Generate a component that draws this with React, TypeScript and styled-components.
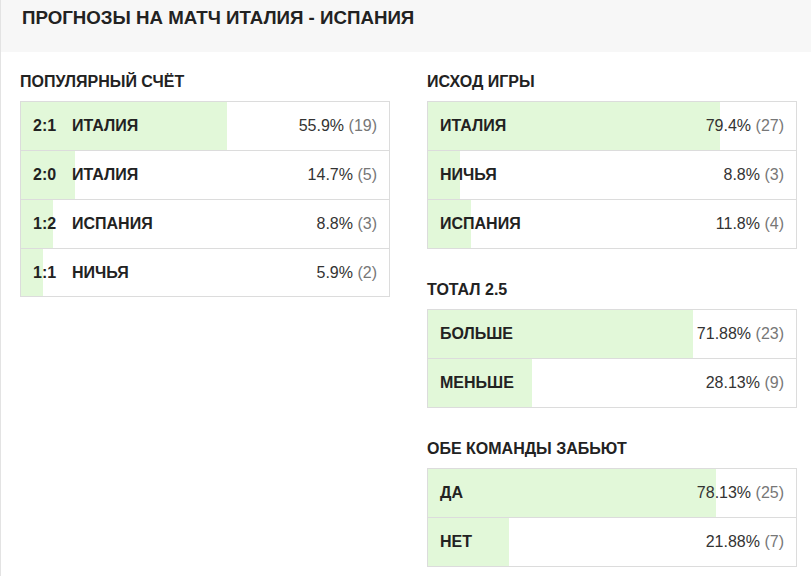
import React from "react";
import styled, { createGlobalStyle } from "styled-components";

const Global = createGlobalStyle`
  html, body { margin: 0; padding: 0; background: #fff; }
  body { font-family: "Liberation Sans", Arial, sans-serif; color: #222; }
`;

const Page = styled.div`
  border-left: 1px solid #e3e3e3;
  min-height: 576px;
  box-sizing: border-box;
`;

const Header = styled.div`
  height: 52px;
  box-sizing: border-box;
  background: #f7f7f7;
  padding: 6px 20px 0 21px;
`;

const HeaderTitle = styled.h1`
  margin: 0;
  font-size: 18.7px;
  line-height: 24px;
  font-weight: bold;
  color: #222;
`;

const Columns = styled.div`
  display: grid;
  grid-template-columns: 370px 370px;
  column-gap: 37px;
  padding: 20px 0 0 19px;
  align-items: start;
`;

const Column = styled.div`
  display: flex;
  flex-direction: column;
  gap: 31px;
`;

const Section = styled.section`
  display: flex;
  flex-direction: column;
`;

const SectionTitle = styled.h2`
  margin: 0 0 9px;
  font-size: 16px;
  line-height: 20px;
  font-weight: bold;
  color: #222;
`;

const Table = styled.div`
  border: 1px solid #dcdcdc;
`;

const Row = styled.div<{ $pct: number; $thick?: boolean }>`
  display: flex;
  align-items: center;
  height: ${(p) => (p.$thick ? 47 : 48)}px;
  padding: 0 12px;
  font-size: 16px;
  background: linear-gradient(
    to right,
    #e2f8d9 0,
    #e2f8d9 ${(p) => p.$pct}%,
    #fff ${(p) => p.$pct}%,
    #fff 100%
  );
  & + & {
    border-top: ${(p) => (p.$thick ? 2 : 1)}px solid #dcdcdc;
  }
`;

const Score = styled.span`
  width: 39px;
  flex: none;
  font-weight: bold;
  color: #222;
`;

const Name = styled.span`
  font-weight: bold;
  color: #222;
  flex: 1;
`;

const Pct = styled.span`
  color: #333;
  white-space: nowrap;
`;

const Count = styled.span`
  color: #777;
`;

type Item = { score?: string; name: string; pct: number; label: string; count: number };

const StatTable = ({ items, thickLast }: { items: Item[]; thickLast?: boolean }) => (
  <Table>
    {items.map((it, i) => (
      <Row key={i} $pct={it.pct} $thick={thickLast && i === items.length - 1}>
        {it.score && <Score>{it.score}</Score>}
        <Name>{it.name}</Name>
        <Pct>
          {it.label} <Count>({it.count})</Count>
        </Pct>
      </Row>
    ))}
  </Table>
);

export default function App() {
  return (
    <Page>
      <Global />
      <Header>
        <HeaderTitle>ПРОГНОЗЫ НА МАТЧ ИТАЛИЯ - ИСПАНИЯ</HeaderTitle>
      </Header>
      <Columns>
        <Column>
          <Section>
            <SectionTitle>ПОПУЛЯРНЫЙ СЧЁТ</SectionTitle>
            <StatTable
              thickLast
              items={[
                { score: "2:1", name: "ИТАЛИЯ", pct: 55.9, label: "55.9%", count: 19 },
                { score: "2:0", name: "ИТАЛИЯ", pct: 14.7, label: "14.7%", count: 5 },
                { score: "1:2", name: "ИСПАНИЯ", pct: 8.8, label: "8.8%", count: 3 },
                { score: "1:1", name: "НИЧЬЯ", pct: 5.9, label: "5.9%", count: 2 },
              ]}
            />
          </Section>
        </Column>
        <Column>
          <Section>
            <SectionTitle>ИСХОД ИГРЫ</SectionTitle>
            <StatTable
              items={[
                { name: "ИТАЛИЯ", pct: 79.4, label: "79.4%", count: 27 },
                { name: "НИЧЬЯ", pct: 8.8, label: "8.8%", count: 3 },
                { name: "ИСПАНИЯ", pct: 11.8, label: "11.8%", count: 4 },
              ]}
            />
          </Section>
          <Section>
            <SectionTitle>ТОТАЛ 2.5</SectionTitle>
            <StatTable
              items={[
                { name: "БОЛЬШЕ", pct: 71.88, label: "71.88%", count: 23 },
                { name: "МЕНЬШЕ", pct: 28.13, label: "28.13%", count: 9 },
              ]}
            />
          </Section>
          <Section>
            <SectionTitle>ОБЕ КОМАНДЫ ЗАБЬЮТ</SectionTitle>
            <StatTable
              items={[
                { name: "ДА", pct: 78.13, label: "78.13%", count: 25 },
                { name: "НЕТ", pct: 21.88, label: "21.88%", count: 7 },
              ]}
            />
          </Section>
        </Column>
      </Columns>
    </Page>
  );
}
